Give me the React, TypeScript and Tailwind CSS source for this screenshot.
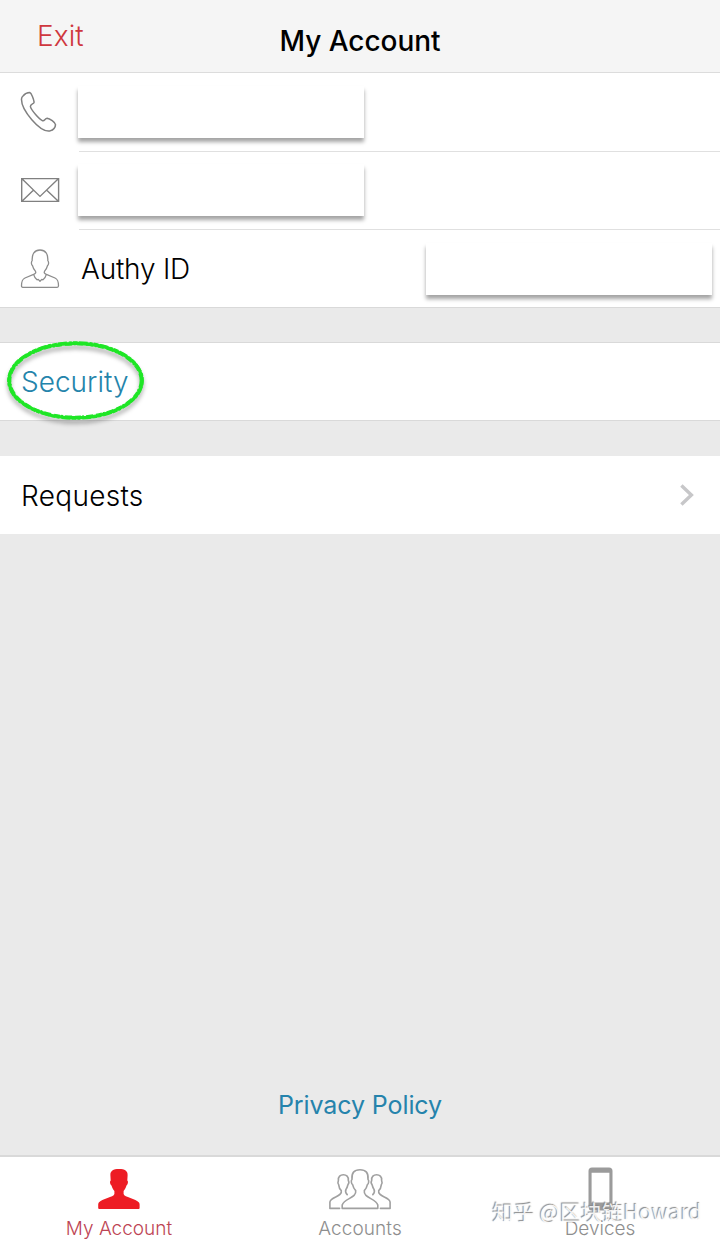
import React from 'react';

type IconProps = { className?: string };

function PhoneIcon({ className }: IconProps) {
  return (
    <svg viewBox="0 0 40 42" className={className} fill="none" stroke="#808080" strokeWidth="1.5" strokeLinejoin="round">
      <path d="M3 5 C5 2.6 8 1.6 9.8 1.6 C11.4 2 13.8 8.4 14.1 11.2 C14 13.2 10.3 12.8 10.4 15.6 C11.5 19.4 19 28 22.7 29.8 C24.6 30.4 24.8 27.4 27.2 27.2 C29.7 27.4 35.3 31.4 35.5 33.6 C35.4 36.5 33 39 30 39.9 C20 42 1 18.8 1.5 8 C1.6 6.6 2 5.8 3 5 Z" />
    </svg>
  );
}

function MailIcon({ className }: IconProps) {
  return (
    <svg viewBox="0 0 40 26" className={className} fill="none" stroke="#808080" strokeWidth="1.4">
      <path d="M1.7 1.6 H38.6 V24.4 H1.7 Z M1.7 1.6 L20 19.4 L38.6 1.6 M1.7 24.4 L13.6 13 M38.6 24.4 L26.5 13" />
    </svg>
  );
}

function PersonIcon({ className }: IconProps) {
  return (
    <svg viewBox="0 0 40 40" className={className} fill="none" stroke="#8c8c8c" strokeWidth="1.3" strokeLinejoin="round">
      <path d="M13.6 25.4 C15.2 24.6 16.4 24 15.4 22.2 C13.6 20 12.9 18.6 12.5 16.6 C11.2 15.8 11 12.8 12.2 11.6 C11.8 5 14.4 1 20 1 C25.6 1 28.2 5 27.8 11.6 C29 12.8 28.8 15.8 27.5 16.6 C27.1 18.6 26.4 20 24.6 22.2 C23.6 24 24.8 24.6 26.4 25.4 L35 29 C37.8 30.4 38.5 32 38.5 36.8 Q38.5 38.3 37.2 38.3 H2.8 Q1.5 38.3 1.5 36.8 C1.5 32 2.2 30.4 5 29 Z" />
      <path d="M13.6 25.4 C14.3 27.8 15.3 29.6 17 30.8 L18.2 30.4 L20 32.2 L21.8 30.4 L23 30.8 C24.7 29.6 25.7 27.8 26.4 25.4" />
    </svg>
  );
}

function AccountTabIcon({ className }: IconProps) {
  return (
    <svg viewBox="0 0 42 42" className={className} fill="#ed1c24">
      <path d="M21 1 C26.8 1 30 2.8 29.6 7.5 L29.3 12.5 C30.6 13.2 29.8 16.6 28.5 17.4 C27.8 20 26.6 21.8 25.6 23 V26 C26.2 29.4 38 30.4 41 34.6 Q41.6 35.4 41.6 36.6 V40 Q41.6 41 40.6 41 H1.2 Q0.2 41 0.2 40 V36.6 Q0.2 35.4 0.8 34.6 C3.8 30.4 15.8 29.4 16.4 26 V23 C15.4 21.8 14.2 20 13.5 17.4 C12.2 16.6 11.4 13.2 12.7 12.5 L12.4 7.5 C12 2.8 15.2 1 21 1 Z" />
    </svg>
  );
}

function AccountsTabIcon({ className }: IconProps) {
  return (
    <svg viewBox="0 0 62 42" className={className} fill="none" stroke="#a0a0a0" strokeWidth="1.6" strokeLinejoin="round" strokeLinecap="round">
      <path d="M31 1.8 C37 1.8 39.6 4.8 39 11.4 C40.3 12.4 39.6 16.2 38.3 16.8 C37.7 19.6 36.8 21 35.3 22.6 C34 30 47 30.4 48.8 37 V40.4 H13.2 V37 C15 30.4 28 30 26.7 22.6 C25.2 21 24.3 19.6 23.7 16.8 C22.4 16.2 21.7 12.4 23 11.4 C22.4 4.8 25 1.8 31 1.8 Z" />
      <path d="M10.6 40.4 H0.9 V34 C1.6 28.5 13.8 29 12.3 22.6 C10.4 20.8 9.9 18.9 9.7 16.8 C8.6 15.4 9 13.4 9.4 12.4 C9 8.6 11.4 6.8 14.4 6.8 C17.4 6.8 19.7 8.6 19.3 12.4 C20.2 14 19.8 15.8 18.9 16.8 C18.4 19 17.9 20 17 21.4 C15.9 23.6 16.4 24.8 18.2 26.6" />
      <path d="M51.4 40.4 H61.1 V34 C60.4 28.5 48.2 29 49.7 22.6 C51.6 20.8 52.1 18.9 52.3 16.8 C53.4 15.4 53 13.4 52.6 12.4 C53 8.6 50.6 6.8 47.6 6.8 C44.6 6.8 42.3 8.6 42.7 12.4 C41.8 14 42.2 15.8 43.1 16.8 C43.6 19 44.1 20 45 21.4 C46.1 23.6 45.6 24.8 43.8 26.6" />
    </svg>
  );
}

function DeviceTabIcon({ className }: IconProps) {
  return (
    <svg viewBox="0 0 25 44" className={className}>
      <path fill="#9b9b9b" fillRule="evenodd" d="M4 0.5 H21 Q24.5 0.5 24.5 4 V40 Q24.5 43.5 21 43.5 H4 Q0.5 43.5 0.5 40 V4 Q0.5 0.5 4 0.5 Z M3.6 5.8 V35.5 H21.4 V5.8 Z" />
    </svg>
  );
}

function ChevronIcon({ className }: IconProps) {
  return (
    <svg viewBox="0 0 16 24" className={className} fill="none" stroke="#c7c7c9" strokeWidth="3.4">
      <path d="M2.4 2.4 L12.4 12 L2.4 21.6" />
    </svg>
  );
}

/* Blank cover over the private value of a row */
function Redacted({ className = '' }: IconProps) {
  return (
    <div className={`h-[52px] w-[286px] bg-white shadow-[0_4px_4px_rgba(0,0,0,0.36)] ${className}`}></div>
  );
}

export default function App() {
  return (
    <div className="relative flex h-[1241px] w-[720px] flex-col overflow-hidden bg-[#eaeaea] font-[Inter,sans-serif] text-[28px] font-light text-black">
      <header className="grid h-[73px] shrink-0 grid-cols-3 border-b border-[#dcdcdc] bg-[#f5f5f5]">
        <span className="pt-[15px] pl-[37px] leading-[42px] tracking-[0.1px] text-[#cf373e]">Exit</span>
        <h1 className="pt-5 text-center leading-[42px] font-medium tracking-[-0.05px]">My Account</h1>
      </header>

      {/* Contact details */}
      <section className="h-[235px] shrink-0 border-b border-[#d9d9d9] bg-white">
        <div className="flex h-[79px] pl-5">
          <PhoneIcon className="mt-[18px] h-[42px] w-10" />
          <div className="ml-[18px] flex flex-1 flex-col justify-between">
            <Redacted className="mt-[13px]" />
            <div className="ml-px h-px bg-[#e0e0e0]"></div>
          </div>
        </div>
        <div className="flex h-[78px] pl-5">
          <MailIcon className="mt-[25px] h-[26px] w-10" />
          <div className="ml-[18px] flex flex-1 flex-col justify-between">
            <Redacted className="mt-3" />
            <div className="ml-px h-px bg-[#e0e0e0]"></div>
          </div>
        </div>
        <div className="flex h-[77px] items-center pl-5">
          <PersonIcon className="h-10 w-10" />
          <span className="ml-[21px] flex-1 pt-px tracking-[-0.2px]">Authy ID</span>
          <Redacted className="mr-2" />
        </div>
      </section>

      <section className="relative mt-[34px] flex h-[79px] shrink-0 items-center border-y border-[#d9d9d9] bg-white pl-[21px]">
        <span className="pt-px text-[#2484ab]">Security</span>
        {/* Hand-drawn ring around the Security row */}
        <svg viewBox="0 0 146 90" className="absolute -top-[6px] left-[3px] h-[90px] w-[146px] drop-shadow-[0_4px_2px_rgba(0,0,0,0.3)]" fill="none" stroke="#1fe626">
          <ellipse cx="72.5" cy="43.5" rx="66.3" ry="37.2" strokeWidth="3.2" />
          <ellipse cx="72.5" cy="43.5" rx="67.7" ry="38.6" strokeWidth="1.4" strokeDasharray="5 1 9 2 3 1" />
          <ellipse cx="72.5" cy="43.5" rx="64.8" ry="35.8" strokeWidth="1.3" strokeDasharray="7 2 2 1 6 3" />
        </svg>
      </section>

      <section className="mt-[35px] flex h-[78px] shrink-0 items-center justify-between bg-white pr-[25px] pl-[21px]">
        <span className="pt-px tracking-[0.3px]">Requests</span>
        <ChevronIcon className="h-6 w-4" />
      </section>

      <main className="flex flex-1 items-end justify-center pb-[30px]">
        <a className="text-[25px] leading-[40px] font-normal tracking-[-0.1px] text-[#2583ac]">Privacy Policy</a>
      </main>

      <nav className="grid h-[86px] shrink-0 grid-cols-3 border-t-2 border-[#d9d9d9] bg-white text-[19px] text-[#8e8e8e]">
        <div className="flex flex-col items-center pt-[11px] pr-[2px] text-[#bd4454]">
          <AccountTabIcon className="h-[42px] w-[42px]" />
          <span className="mt-[5px] leading-7">My Account</span>
        </div>
        <div className="flex flex-col items-center pt-[11px]">
          <AccountsTabIcon className="h-[42px] w-[62px]" />
          <span className="mt-[5px] leading-7 tracking-[0.1px]">Accounts</span>
        </div>
        <div className="flex flex-col items-center pt-[10px]">
          <DeviceTabIcon className="h-11 w-[25px]" />
          <span className="mt-1 leading-7">Devices</span>
        </div>
      </nav>

      {/* Watermark */}
      <div className="absolute right-[18px] bottom-[14px] font-['Noto_Sans_CJK_SC',sans-serif] text-[21px] leading-8 font-normal tracking-[0.2px] whitespace-nowrap text-white/85 [text-shadow:-1px_-1px_1px_#888]">
        知乎 @区块链Howard
      </div>
    </div>
  );
}
